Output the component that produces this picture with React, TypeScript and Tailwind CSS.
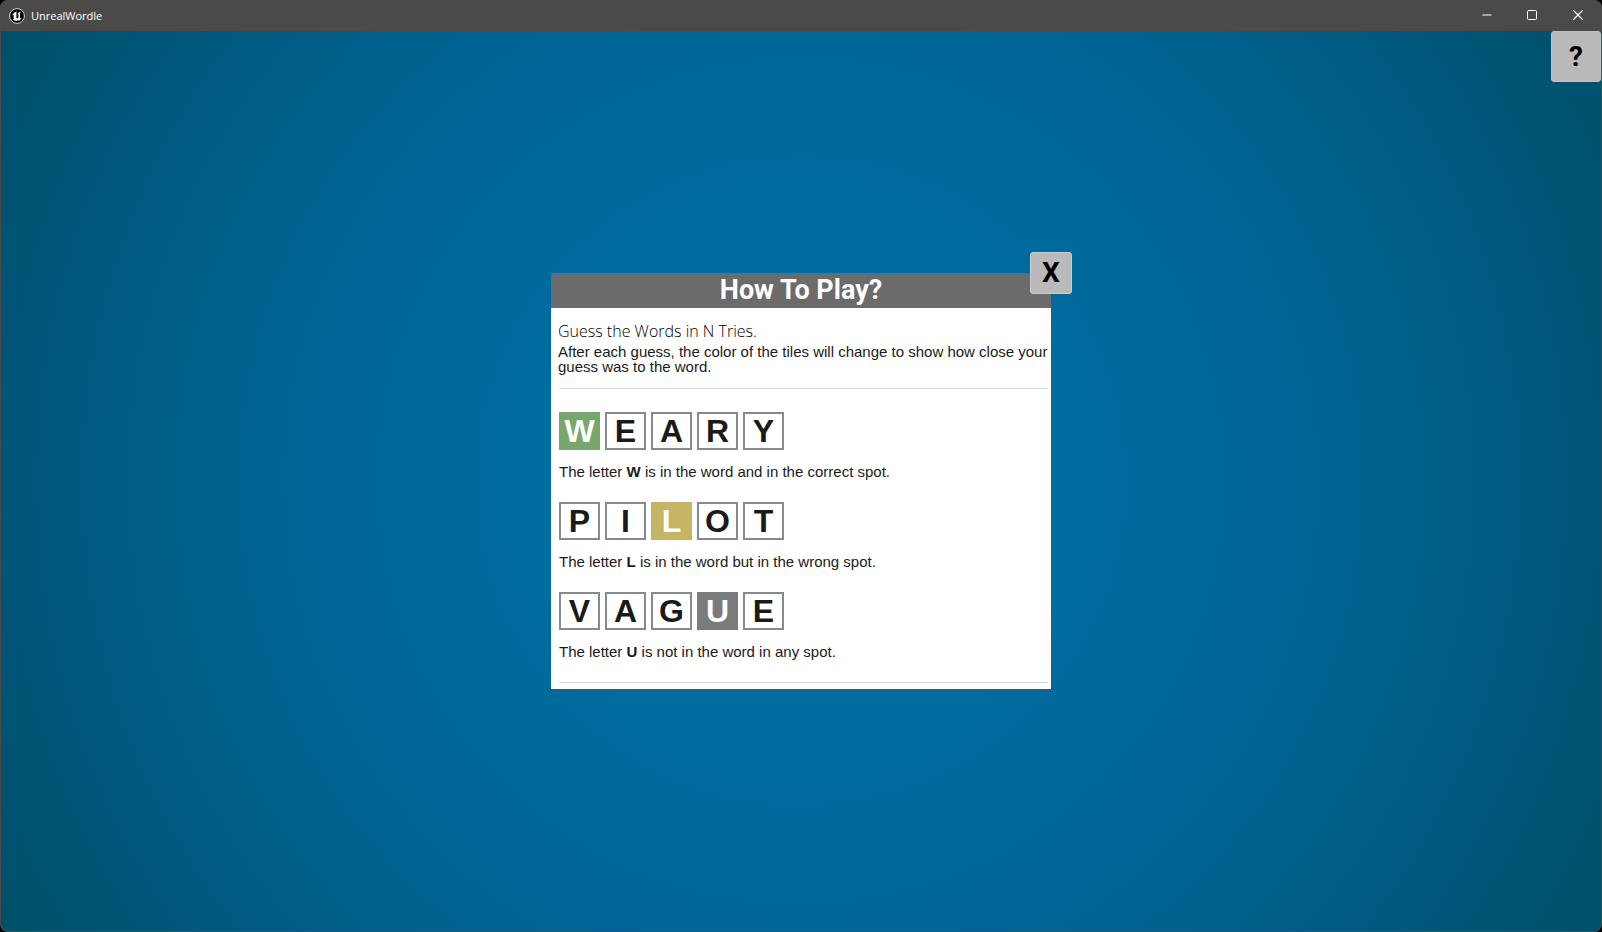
import { Minus, Square, X } from "lucide-react";

type Tile = { letter: string; tone?: "green" | "gold" | "gray" };

const tones = {
  green: "bg-[#79a76b] text-white",
  gold: "bg-[#c4b464] text-white",
  gray: "bg-[#797b7d] text-white",
};

const examples: { tiles: Tile[]; letter: string; text: string }[] = [
  {
    tiles: [{ letter: "W", tone: "green" }, { letter: "E" }, { letter: "A" }, { letter: "R" }, { letter: "Y" }],
    letter: "W",
    text: "is in the word and in the correct spot.",
  },
  {
    tiles: [{ letter: "P" }, { letter: "I" }, { letter: "L", tone: "gold" }, { letter: "O" }, { letter: "T" }],
    letter: "L",
    text: "is in the word but in the wrong spot.",
  },
  {
    tiles: [{ letter: "V" }, { letter: "A" }, { letter: "G" }, { letter: "U", tone: "gray" }, { letter: "E" }],
    letter: "U",
    text: "is not in the word in any spot.",
  },
];

function Logo() {
  return (
    <svg viewBox="0 0 16 16" className="size-4" aria-hidden="true">
      <circle cx="8" cy="8" r="7.4" fill="#050505" stroke="#e8e8e8" strokeWidth="0.9" />
      <path
        d="M7.2 3.7C5.2 4.2 3.7 5.6 3.2 7.6c.5-.6 1-.9 1.3-.7.2.1.2.4.2.7v2.9c0 .6-.3.8-.8.7.9 1.1 2.3 1.7 3.9 1.7l1-1 1 .8c1.3-.6 2.4-1.8 2.9-3.3-.7.7-1.2 1-1.5.8-.2-.1-.2-.3-.2-.6V5.3c0-.6.4-1.2 1-1.5-1.3.1-2.5.6-3.2 1.5.4 0 .6.2.6.6v3.8c-.3.5-.7.8-1.2.8-.5 0-.8-.3-.8-.8V5c0-.5.2-.9.6-1.3z"
        fill="#fff"
      />
    </svg>
  );
}

function TitleBar() {
  return (
    <header className="flex h-[31px] items-center bg-[#4c4a48] text-white">
      <div className="flex flex-1 items-center gap-1.5 pl-[9px]">
        <Logo />
        <h1 className="font-['Open_Sans',sans-serif] text-[11px] leading-4">UnrealWordle</h1>
      </div>
      <div className="flex h-[30px] self-start pr-px">
        <button aria-label="Minimize" className="flex w-[45px] items-center justify-center">
          <Minus className="size-3.5" strokeWidth={2} />
        </button>
        <button aria-label="Maximize" className="flex w-[45px] items-center justify-center">
          <Square className="size-3" strokeWidth={2} />
        </button>
        <button aria-label="Close" className="flex w-[47px] items-center justify-center">
          <X className="size-[18px]" strokeWidth={1.5} />
        </button>
      </div>
    </header>
  );
}

function HowToPlay() {
  return (
    <section aria-labelledby="how-to-play" className="relative w-full max-w-[500px] bg-white text-[#1a1a1b]">
      <h2
        id="how-to-play"
        className="bg-[#6b6b6b] pb-px text-center font-[Roboto,sans-serif] text-[27px] leading-[34px] font-bold text-white"
      >
        How To Play?
      </h2>
      <button
        aria-label="Close help"
        className="absolute -top-[21px] -right-[21px] size-[42px] rounded-[3px] border border-[#cdcdcd] bg-[#bababa] font-[Roboto,sans-serif] text-[28px] leading-none font-bold text-black"
      >
        X
      </button>
      <div className="pt-[13px] pb-1.5 pl-[7px] font-['Liberation_Sans',Arial,sans-serif] text-[15px] leading-[15px]">
        <p className="mb-[3px] font-['Open_Sans',sans-serif] text-base leading-5 font-light text-black">
          Guess the Words in N Tries.
        </p>
        <p>After each guess, the color of the tiles will change to show how close your guess was to the word.</p>
        <div className="mt-3.5 mr-[3px] ml-px flex flex-col gap-[23px] border-y border-[#d6d8da] py-[23px]">
          {examples.map((example) => (
            <div key={example.letter}>
              <div className="flex gap-[5px]">
                {example.tiles.map(({ letter, tone }) => (
                  <span
                    key={letter}
                    className={`flex h-[38px] w-[41px] items-center justify-center text-[32px] leading-none font-bold ${
                      tone ? tones[tone] : "border-2 border-[#878a8c]"
                    }`}
                  >
                    {letter}
                  </span>
                ))}
              </div>
              <p className="mt-3.5">
                The letter <strong>{example.letter}</strong> {example.text}
              </p>
            </div>
          ))}
        </div>
      </div>
    </section>
  );
}

export default function App() {
  return (
    <div className="bg-black">
      <div className="flex min-h-screen flex-col overflow-hidden rounded-lg bg-[#4c4a48]">
        <TitleBar />
        <main className="relative mx-px mb-px flex flex-1 items-center justify-center rounded-b-lg bg-[radial-gradient(circle_farthest-corner,#006ea3_0%,#006ca0_30%,#006799_48%,#006292_60%,#005b82_77%,#005576_88%,#00506a_100%)]">
          <HowToPlay />
          <button
            aria-label="Help"
            className="absolute top-0 right-0 h-[51px] w-[50px] rounded-[3px] border border-[#b5c6cc] bg-[#bababa] font-[Roboto,sans-serif] text-[28px] leading-none font-bold text-black"
          >
            ?
          </button>
        </main>
      </div>
    </div>
  );
}
